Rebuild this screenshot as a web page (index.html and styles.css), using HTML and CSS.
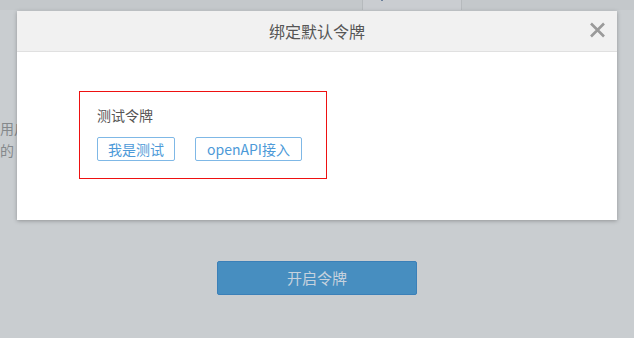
FILE: index.html
```html
<!DOCTYPE html>
<html lang="zh-CN">
<head>
<meta charset="utf-8">
<title>绑定默认令牌</title>
<link rel="stylesheet" href="styles.css">
</head>
<body>
<div class="page">
  <div class="topbar">
    <div class="tab"><span class="tab-dot"></span></div>
  </div>
  <div class="content">
    <div class="bg-text">
      <p>用户令牌</p>
      <p>的</p>
    </div>
    <div class="action">
      <button class="primary-btn">开启令牌</button>
    </div>
  </div>
</div>

<div class="modal">
  <div class="modal-header">
    <span class="modal-title">绑定默认令牌</span>
    <button class="modal-close" aria-label="关闭">
      <svg width="17" height="16" viewBox="0 0 17 16">
        <path d="M2 1.5 L15 14.5 M15 1.5 L2 14.5" stroke="#9a9a9a" stroke-width="2.6" stroke-linecap="butt" fill="none"/>
      </svg>
    </button>
  </div>
  <div class="modal-body">
    <div class="token-group">
      <div class="token-label">测试令牌</div>
      <div class="token-list">
        <button class="token-btn">我是测试</button>
        <button class="token-btn token-btn-wide">openAPI接入</button>
      </div>
    </div>
  </div>
</div>
</body>
</html>
```

FILE: styles.css
```css
html, body {
  margin: 0;
  padding: 0;
}
body {
  width: 634px;
  height: 338px;
  overflow: hidden;
  position: relative;
  background: #c9cdd0;
  font-family: "Noto Sans CJK SC", "Microsoft YaHei", sans-serif;
}
.page {
  display: flex;
  flex-direction: column;
}
.topbar {
  height: 10px;
  background: #c4c8cb;
  display: flex;
}
.tab {
  margin-left: 362px;
  width: 98px;
  border-left: 1px solid #b6babd;
  border-right: 1px solid #b6babd;
  background: #cacdd1;
  position: relative;
}
.tab-dot {
  position: absolute;
  left: 18px;
  top: 0;
  width: 2px;
  height: 1px;
  background: #6a7f9a;
}
.content {
  display: flex;
  flex-direction: column;
}
.bg-text {
  padding-top: 107px;
}
.bg-text p {
  margin: 0;
  font-size: 14px;
  line-height: 22px;
  color: #85898c;
  white-space: nowrap;
}
.action {
  display: flex;
  justify-content: center;
  margin-top: 100px;
}
.primary-btn {
  width: 200px;
  height: 34px;
  margin: 0;
  padding: 0;
  background: #478ec0;
  border: 1px solid #3b80b8;
  border-radius: 2px;
  color: #c6d2de;
  font-family: inherit;
  font-size: 15px;
  line-height: 32px;
}

.modal {
  position: absolute;
  left: 17px;
  top: 11px;
  width: 600px;
  background: #fff;
  box-shadow: 0 1px 4px rgba(0, 0, 0, 0.28);
}
.modal-header {
  height: 40px;
  background: #f1f1f1;
  border-bottom: 1px solid #e0e0e0;
  display: flex;
  align-items: center;
  justify-content: center;
  position: relative;
}
.modal-title {
  font-size: 16px;
  color: #555;
  line-height: 40px;
}
.modal-close {
  position: absolute;
  right: 11px;
  top: 11px;
  width: 17px;
  height: 16px;
  padding: 0;
  margin: 0;
  border: 0;
  background: transparent;
  display: flex;
}
.modal-body {
  padding: 39px 0 41px 62px;
}
.token-group {
  width: 213px;
  border: 1px solid #ee1111;
  padding: 13px 16px 17px 17px;
}
.token-label {
  font-size: 14px;
  line-height: 20px;
  color: #555;
}
.token-list {
  display: flex;
  gap: 20px;
  margin-top: 12px;
}
.token-btn {
  height: 24px;
  margin: 0;
  padding: 0 10px;
  background: #fff;
  border: 1px solid #7fb8e6;
  border-radius: 2px;
  color: #4d9ad8;
  font-family: inherit;
  font-size: 14px;
  line-height: 22px;
  white-space: nowrap;
}
.token-btn-wide {
  padding: 0 11px;
}
```
